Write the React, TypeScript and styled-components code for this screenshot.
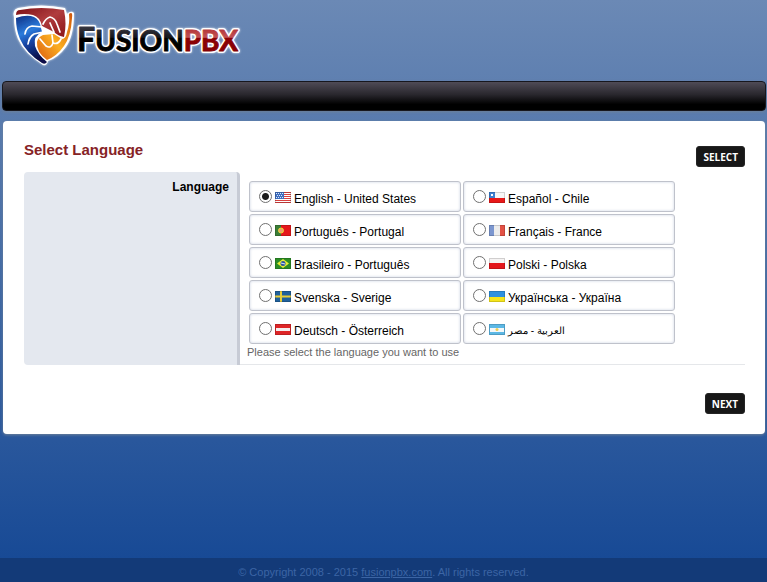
import React, { useState } from "react";
import styled, { createGlobalStyle } from "styled-components";

const GlobalStyle = createGlobalStyle`
  * { box-sizing: border-box; }
  html { min-height: 100%; background: linear-gradient(#6b89b5, #144794) fixed; }
  body {
    margin: 0;
    font-family: "Liberation Sans", Arial, sans-serif;
    font-size: 12px;
    color: #000;
  }
`;

const Page = styled.div`
  display: flex;
  flex-direction: column;
  min-height: 100vh;
`;

const Header = styled.header`
  height: 81px;
  padding-left: 10px;
`;

const MenuBar = styled.nav`
  height: 30px;
  margin: 0 1px 10px 2px;
  border: 1px solid #17171d;
  border-radius: 4px;
  background: linear-gradient(#4f4b56, #29272d 45%, #000 80%);
  box-shadow: 0 1px 3px #6d7f97;
`;

const Panel = styled.main`
  margin: 0 2px 0 3px;
  padding: 20px 20px 20px 21px;
  border-radius: 4px;
  background: #fff;
  box-shadow: 0 1px 3px #6f8299;
`;

const TitleRow = styled.div`
  display: flex;
  justify-content: space-between;
  height: 31px;
`;

const Title = styled.h1`
  margin: 0;
  color: #862326;
  font-size: 15px;
  line-height: 18px;
`;

const Button = styled.button`
  height: 21px;
  padding: 0 6px;
  border: 1px solid #242424;
  border-radius: 3px;
  background: #171717;
  color: #fff;
  font: bold 10px "Open Sans", sans-serif;
  text-transform: uppercase;
`;

const TopAction = styled.div`
  padding-top: 5px;
`;

const BottomAction = styled.div`
  display: flex;
  justify-content: flex-end;
  margin-top: 28px;
`;

const FormRow = styled.div`
  display: grid;
  grid-template-columns: 216px 1fr;
`;

const FieldName = styled.div`
  padding: 7px 8px 0 0;
  border-right: 3px solid #c7cbd5;
  border-radius: 4px 4px 0 4px;
  background: #e4e8ef;
  font-weight: bold;
  line-height: 16px;
  text-align: right;
`;

const Field = styled.div`
  padding: 9px 0 5px 7px;
  border-bottom: 1px solid #e5e7ea;
`;

const Options = styled.div`
  display: grid;
  grid-template-columns: repeat(2, minmax(0, 212px));
  gap: 2px;
  padding-left: 2px;
`;

const Option = styled.label`
  display: flex;
  align-items: center;
  height: 31px;
  padding-left: 9px;
  border: 1px solid #bfc2cb;
  border-radius: 3px;
  box-shadow: inset 0 0 3px #cdd4e3;
  white-space: nowrap;
`;

const Radio = styled.input`
  appearance: none;
  width: 13px;
  height: 13px;
  margin: 0 3px 0 0;
  border: 1px solid #707070;
  border-radius: 50%;
  background: #fff;
  &:checked {
    background: radial-gradient(circle, #1c1c1c 3px, #fff 4px);
  }
`;

const Flag = styled.svg`
  width: 16px;
  height: 11px;
  margin: 2px 3px 0 0;
`;

const OptionText = styled.span<{ $small?: boolean }>`
  padding-top: 4px;
  font-size: ${(p) => (p.$small ? 10 : 12)}px;
  line-height: 14px;
`;

const Hint = styled.p`
  margin: 2px 0 0;
  color: #666;
  font-size: 11px;
  line-height: 13px;
`;

const Footer = styled.footer`
  margin-top: auto;
  padding: 8px 0 3px;
  background: #133a78;
  color: #3c65a5;
  font-size: 11px;
  line-height: 13px;
  text-align: center;
  a { color: inherit; }
`;

const Wordmark = () => (
  <>
    <tspan fontSize="32">F</tspan>
    <tspan fontSize="28">USION</tspan>
  </>
);

const Logo = () => (
  <svg width="240" height="72" viewBox="10 0 240 72" role="img" aria-label="FusionPBX">
    <defs>
      <linearGradient id="red" x1="0" y1="0" x2="1" y2="1">
        <stop offset="0" stopColor="#7d1015" />
        <stop offset=".5" stopColor="#b03c3e" />
        <stop offset="1" stopColor="#8c1518" />
      </linearGradient>
      <linearGradient id="blue" x1="0" y1="0" x2=".3" y2="1">
        <stop offset="0" stopColor="#0c2c80" />
        <stop offset=".4" stopColor="#2c7cdc" />
        <stop offset=".65" stopColor="#1540a0" />
        <stop offset="1" stopColor="#070f48" />
      </linearGradient>
      <linearGradient id="orange" x1="1" y1="0" x2="0" y2="1">
        <stop offset="0" stopColor="#cf5608" />
        <stop offset=".55" stopColor="#fbae22" />
        <stop offset="1" stopColor="#d95b12" />
      </linearGradient>
      <linearGradient id="ink" gradientUnits="userSpaceOnUse" x1="0" y1="26" x2="0" y2="51">
        <stop offset="0" stopColor="#3a3a44" />
        <stop offset=".45" stopColor="#15151b" />
        <stop offset=".5" stopColor="#000" />
      </linearGradient>
      <linearGradient id="wine" gradientUnits="userSpaceOnUse" x1="0" y1="26" x2="0" y2="51">
        <stop offset="0" stopColor="#b02a2d" />
        <stop offset=".45" stopColor="#c15256" />
        <stop offset=".5" stopColor="#8b0006" />
        <stop offset="1" stopColor="#860006" />
      </linearGradient>
      <filter id="glow" x="-10%" y="-20%" width="120%" height="140%">
        <feDropShadow dx="0" dy="0" stdDeviation="1" floodColor="#fff" floodOpacity=".8" />
      </filter>
    </defs>
    <g filter="url(#glow)">
      <path d="M14 17Q12 10 18 8Q41 3 65 8L67 14Q71 10 74 13Q74 36 66 47Q58 58 48 61Q47 66 43 65Q24 53 18 39Q14 30 14 17Z" fill="#fff" />
      <path d="M16 15Q16 10 20 10Q41 6 64 10Q67 24 64 37Q58 36 54 32L42 26Q40 17 33 15Q24 13 16 15Z" fill="url(#red)" />
      <path d="M16 18Q27 14 34 17Q40 20 41 28L42 32Q33 36 35 46Q38 55 47 62Q45 65 42 63Q26 53 20 39Q16 30 16 18Z" fill="url(#blue)" />
      <path d="M69 14Q73 11 72 18Q71 36 64 46Q57 56 47 60Q36 52 37 42Q38 37 43 35L54 34L62 39Q66 39 67 32Q70 23 69 14Z" fill="url(#orange)" />
      <g fill="none" stroke="#fff" strokeWidth="1.7" strokeLinecap="round" strokeLinejoin="round">
        <path d="M43 24Q46 18 50 17Q55 18 57 24L60 32" />
        <path d="M50 23L54 32" />
        <path d="M25 34Q26 27 32 26L42 27" />
        <path d="M28 44Q29 37 34 34L43 32" />
        <path d="M40 39L46 46Q51 49 53 43L52 35" />
        <path d="M53 43Q58 45 61 39" />
      </g>
    </g>
    <g fontFamily="Lato, sans-serif" fontWeight="700" strokeLinejoin="round">
      <text x="77" y="51" fill="#fff" stroke="#fff" strokeWidth="4" filter="url(#glow)" aria-hidden="true">
        <Wordmark /><tspan fontSize="28">PBX</tspan>
      </text>
      <text x="77" y="51" fill="url(#ink)" stroke="url(#ink)">
        <Wordmark /><tspan fill="url(#wine)" stroke="url(#wine)" fontSize="28">PBX</tspan>
      </text>
    </g>
  </svg>
);

const flags: Record<string, React.ReactNode> = {
  us: (
    <>
      <path fill="#fff" d="M0 0h16v11H0z" />
      <path stroke="#d9413f" d="M0 .5h16M0 2.5h16M0 4.5h16M0 6.5h16M0 8.5h16M0 10.5h16" />
      <path fill="#3f6fc0" d="M0 0h9v7H0z" />
      <path stroke="#dce8fa" strokeDasharray="1 1" d="M1 1.5h8M2 3.5h6M1 5.5h8" />
    </>
  ),
  cl: (
    <>
      <path fill="#f6f6f6" d="M0 0h16v6H0z" />
      <path fill="#e81818" d="M0 6h16v5H0z" />
      <path fill="#3c7fd0" d="M0 0h6v6H0z" />
      <path fill="#fff" d="M2 2h2v2H2z" />
    </>
  ),
  pt: (
    <>
      <path fill="#e5181c" d="M0 0h16v11H0z" />
      <path fill="#3a7d36" d="M0 0h6v11H0z" />
      <circle cx="6" cy="5.5" r="2.5" fill="#e9a36a" stroke="#f1d433" />
    </>
  ),
  fr: (
    <>
      <path fill="#ececec" d="M0 0h16v11H0z" />
      <path fill="#7b96cf" d="M0 0h5v11H0z" />
      <path fill="#e35145" d="M11 0h5v11h-5z" />
    </>
  ),
  br: (
    <>
      <path fill="#2b8c25" d="M0 0h16v11H0z" />
      <path fill="#e8ee35" d="M8 1l6 4.500-6 4.500-6-4.500z" />
      <circle cx="8" cy="5.500" r="2.500" fill="#2b569c" />
      <path stroke="#d5e5f4" d="M6 5l4 1" />
    </>
  ),
  pl: (
    <>
      <path fill="#f5f3f3" d="M0 0h16v6H0z" />
      <path fill="#e3161b" d="M0 5h16v6H0z" />
    </>
  ),
  se: (
    <>
      <path fill="#20619c" d="M0 0h16v11H0z" />
      <path stroke="#e9ce38" strokeWidth="2" d="M6 0v11M0 5.500h16" />
    </>
  ),
  ua: (
    <>
      <path fill="#2f91df" d="M0 0h16v6H0z" />
      <path fill="#f6e51c" d="M0 6h16v5H0z" />
    </>
  ),
  at: (
    <>
      <path fill="#de2527" d="M0 0h16v11H0z" />
      <path fill="#f4eeee" d="M1 4h14v3H1z" />
    </>
  ),
  ar: (
    <>
      <path fill="#5cb8e5" d="M0 0h16v11H0z" />
      <path fill="#f4f8f9" d="M1 4h14v4H1z" />
      <circle cx="8" cy="5.500" r="1.500" fill="#edcd55" />
    </>
  ),
};

const languages = [
  { flag: "us", name: "English - United States", lang: "en-us" },
  { flag: "cl", name: "Español - Chile", lang: "es-cl" },
  { flag: "pt", name: "Português - Portugal", lang: "pt-pt" },
  { flag: "fr", name: "Français - France", lang: "fr-fr" },
  { flag: "br", name: "Brasileiro - Português", lang: "pt-br" },
  { flag: "pl", name: "Polski - Polska", lang: "pl" },
  { flag: "se", name: "Svenska - Sverige", lang: "sv-se" },
  { flag: "ua", name: "Українська - Україна", lang: "uk" },
  { flag: "at", name: "Deutsch - Österreich", lang: "de-at" },
  { flag: "ar", name: "العربية - مصر", lang: "ar-eg" },
];

export default function App() {
  const [selected, setSelected] = useState("en-us");
  return (
    <>
      <GlobalStyle />
      <Page>
        <Header><Logo /></Header>
        <MenuBar />
        <Panel>
          <TitleRow>
            <Title>Select Language</Title>
            <TopAction><Button type="button">Select</Button></TopAction>
          </TitleRow>
          <FormRow>
            <FieldName id="language-label">Language</FieldName>
            <Field>
              <Options role="radiogroup" aria-labelledby="language-label">
                {languages.map(({ flag, name, lang }) => (
                  <Option key={lang}>
                    <Radio
                      type="radio"
                      name="language"
                      value={lang}
                      checked={selected === lang}
                      onChange={() => setSelected(lang)}
                    />
                    <Flag viewBox="0 0 16 11" aria-hidden="true">
                      {flags[flag]}
                      <path fill="none" stroke="#000" strokeOpacity=".15" d="M.5.5h15v10H.5z" />
                    </Flag>
                    <OptionText lang={lang} $small={lang === "ar-eg"}>{name}</OptionText>
                  </Option>
                ))}
              </Options>
              <Hint>Please select the language you want to use</Hint>
            </Field>
          </FormRow>
          <BottomAction><Button type="button">Next</Button></BottomAction>
        </Panel>
        <Footer>
          © Copyright 2008 - 2015 <a href="#fusionpbx">fusionpbx.com</a>. All rights reserved.
        </Footer>
      </Page>
    </>
  );
}
